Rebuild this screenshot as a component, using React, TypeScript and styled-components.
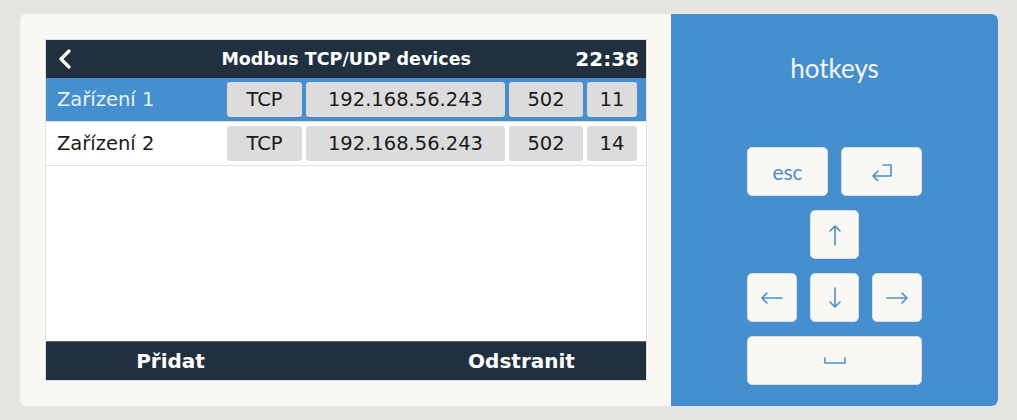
import styled, { createGlobalStyle } from "styled-components";

const GlobalStyle = createGlobalStyle`
  html, body {
    margin: 0;
    padding: 0;
    background: #e6e5e1;
  }
`;

const Page = styled.div`
  padding: 14px 19px 14px 20px;
`;

const Card = styled.div`
  display: flex;
  width: 978px;
  height: 392px;
  background: #f9f8f5;
  border-radius: 6px;
  overflow: hidden;
`;

const ScreenArea = styled.div`
  width: 651px;
  padding: 26px 25px 0 26px;
  box-sizing: border-box;
`;

const Screen = styled.div`
  display: flex;
  flex-direction: column;
  width: 600px;
  height: 340px;
  background: #fff;
  box-shadow: 0 0 0 1px #e2e2e2;
  font-family: "DejaVu Sans", sans-serif;
`;

const Header = styled.div`
  display: flex;
  align-items: center;
  height: 38px;
  padding: 0 7px 0 11px;
  background: #21303f;
  color: #fff;
  font-weight: bold;
`;

const Back = styled.svg`
  width: 16px;
  height: 20px;
`;

const Title = styled.div`
  flex: 1;
  text-align: center;
  font-size: 17.5px;
  padding-left: 44px;
`;

const Clock = styled.div`
  font-size: 20px;
`;

const Row = styled.div<{ $selected?: boolean }>`
  display: flex;
  align-items: center;
  height: 43px;
  padding: 0 9px 0 11px;
  border-bottom: 1px solid #dedede;
  background: ${(p) => (p.$selected ? "#458fcf" : "#fff")};
  color: ${(p) => (p.$selected ? "#e8f0f8" : "#1a1a1a")};
  font-size: 19.5px;
`;

const Name = styled.div`
  flex: 1;
`;

const Cells = styled.div`
  display: flex;
  gap: 4px;
`;

const Cell = styled.div<{ $w: number }>`
  width: ${(p) => p.$w}px;
  height: 35px;
  display: flex;
  align-items: center;
  justify-content: center;
  background: #dcdcdc;
  border-radius: 3px;
  color: #1a1a1a;
  font-size: 19.5px;
`;

const Spacer = styled.div`
  flex: 1;
`;

const Footer = styled.div`
  display: flex;
  justify-content: space-between;
  align-items: center;
  height: 39px;
  background: #21303f;
  border-top: 1px solid #5a6570;
  box-sizing: border-box;
  color: #fff;
  font-weight: bold;
  font-size: 20px;
`;

const FooterButton = styled.div`
  width: 249px;
  text-align: center;
`;

const Panel = styled.div`
  flex: 1;
  display: flex;
  flex-direction: column;
  align-items: center;
  background: #458fcf;
  border-radius: 0 6px 6px 0;
  padding-top: 38px;
  box-sizing: border-box;
`;

const PanelTitle = styled.div`
  font-family: Lato, "Open Sans", sans-serif;
  font-size: 26px;
  color: #f4f6f9;
  height: 35px;
  margin-bottom: 60px;
`;

const Keys = styled.div`
  display: flex;
  flex-direction: column;
  gap: 14px;
  width: 175px;
`;

const KeyRow = styled.div<{ $center?: boolean }>`
  display: flex;
  justify-content: ${(p) => (p.$center ? "center" : "space-between")};
`;

const Key = styled.div<{ $w: number }>`
  width: ${(p) => p.$w}px;
  height: 49px;
  display: flex;
  align-items: center;
  justify-content: center;
  background: #f9f8f5;
  border: 1px solid #d8dde2;
  border-radius: 5px;
  box-sizing: border-box;
  color: #4a8fcf;
  font-family: Lato, "Open Sans", sans-serif;
  font-size: 21px;
`;

const Glyph = styled.svg`
  fill: none;
  stroke: #4a8fcf;
  stroke-width: 1.6;
  stroke-linecap: round;
  stroke-linejoin: round;
`;

type Device = {
  name: string;
  proto: string;
  ip: string;
  port: number;
  unit: number;
};

const devices: Device[] = [
  { name: "Zařízení 1", proto: "TCP", ip: "192.168.56.243", port: 502, unit: 11 },
  { name: "Zařízení 2", proto: "TCP", ip: "192.168.56.243", port: 502, unit: 14 },
];

export default function App() {
  return (
    <>
      <GlobalStyle />
      <Page>
        <Card>
          <ScreenArea>
            <Screen>
              <Header>
                <Back viewBox="0 0 16 20">
                  <path d="M12 2 L4 10 L12 18" fill="none" stroke="#fff" strokeWidth="3.2" strokeLinecap="round" strokeLinejoin="round" />
                </Back>
                <Title>Modbus TCP/UDP devices</Title>
                <Clock>22:38</Clock>
              </Header>
              {devices.map((d, i) => (
                <Row key={d.name} $selected={i === 0}>
                  <Name>{d.name}</Name>
                  <Cells>
                    <Cell $w={75}>{d.proto}</Cell>
                    <Cell $w={199}>{d.ip}</Cell>
                    <Cell $w={74}>{d.port}</Cell>
                    <Cell $w={50}>{d.unit}</Cell>
                  </Cells>
                </Row>
              ))}
              <Spacer />
              <Footer>
                <FooterButton>Přidat</FooterButton>
                <FooterButton>Odstranit</FooterButton>
              </Footer>
            </Screen>
          </ScreenArea>
          <Panel>
            <PanelTitle>hotkeys</PanelTitle>
            <Keys>
              <KeyRow>
                <Key $w={81}>esc</Key>
                <Key $w={81}>
                  <Glyph width="22" height="18" viewBox="0 0 22 18">
                    <path d="M12 2 H20 V13 H2 M2 13 L7 8 M2 13 L7 18" />
                  </Glyph>
                </Key>
              </KeyRow>
              <KeyRow $center>
                <Key $w={49}>
                  <Glyph width="14" height="22" viewBox="0 0 14 22">
                    <path d="M7 2 V21 M7 2 L2 7 M7 2 L12 7" />
                  </Glyph>
                </Key>
              </KeyRow>
              <KeyRow>
                <Key $w={50}>
                  <Glyph width="22" height="14" viewBox="0 0 22 14">
                    <path d="M1 7 H21 M1 7 L6 2 M1 7 L6 12" />
                  </Glyph>
                </Key>
                <Key $w={49}>
                  <Glyph width="14" height="22" viewBox="0 0 14 22">
                    <path d="M7 1 V20 M7 20 L2 15 M7 20 L12 15" />
                  </Glyph>
                </Key>
                <Key $w={50}>
                  <Glyph width="22" height="14" viewBox="0 0 22 14">
                    <path d="M1 7 H21 M21 7 L16 2 M21 7 L16 12" />
                  </Glyph>
                </Key>
              </KeyRow>
              <KeyRow>
                <Key $w={175}>
                  <Glyph width="22" height="8" viewBox="0 0 22 8">
                    <path d="M1 1 V6 H21 V1" />
                  </Glyph>
                </Key>
              </KeyRow>
            </Keys>
          </Panel>
        </Card>
      </Page>
    </>
  );
}
